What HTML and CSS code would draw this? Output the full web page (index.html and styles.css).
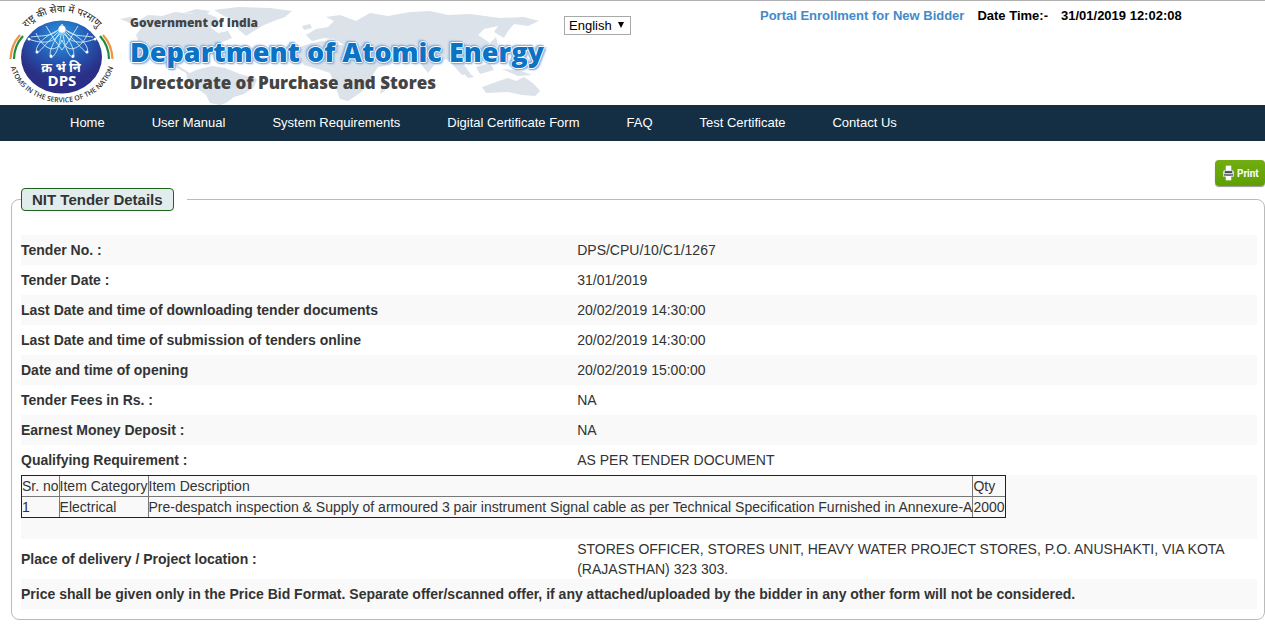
FILE: index.html
```html
<!DOCTYPE html>
<html lang="en">
<head>
<meta charset="utf-8">
<title>NIT Tender Details</title>
<link rel="stylesheet" href="styles.css">
</head>
<body>
<header class="masthead">
  <div class="brand">
    <svg class="emblem" viewBox="0 0 110 98" role="img" aria-label="DPS emblem">
      <defs>
        <radialGradient id="globe" cx="50%" cy="22%" r="75%">
          <stop offset="0" stop-color="#2b9be0"/>
          <stop offset=".45" stop-color="#2459b4"/>
          <stop offset=".8" stop-color="#2b2f86"/>
        </radialGradient>
        <path id="arc-top" d="M14 29 A44 39 0 0 1 94 29"/>
        <path id="arc-bottom" d="M1 50 A52.500 46 0 0 0 107 50"/>
      </defs>
      <ellipse cx="53.500" cy="51" rx="40.500" ry="36.500" fill="url(#globe)"/>
      <g fill="none" stroke="#d7ecfa" stroke-width=".9">
        <path d="M20 33C30 36 44 41 54 25C64 41 78 36 87 33"/>
        <path d="M28 27C34 42 48 50 54 34C60 50 74 42 80 27"/>
        <path d="M23 31C38 29 48 31 54 18C60 31 70 29 85 31"/>
        <path d="M54 23C42 32 34 44 29 47C25 40 40 27 54 23C68 27 83 40 79 47C74 44 66 32 54 23"/>
        <path d="M54 23C42 40 41 48 43 52C50 48 52 35 54 23C56 35 58 48 65 52C67 48 66 40 54 23"/>
        <path d="M38 20Q46 34 54 44Q62 34 70 20"/>
      </g>
      <g fill="#fff">
        <circle cx="54" cy="23" r="3.500"/>
        <circle cx="21" cy="33" r="1.500"/><circle cx="87" cy="33" r="1.500"/>
        <circle cx="29" cy="46" r="1.500"/><circle cx="79" cy="46" r="1.500"/>
        <circle cx="43" cy="50" r="1.500"/><circle cx="65" cy="50" r="1.500"/>
      </g>
      <g fill="none" stroke-width="2.200">
        <path d="M12 29Q3 39 2.500 53" stroke="#f0944a"/>
        <path d="M15 30Q6 40 6 53" stroke="#238b3c"/>
        <path d="M95 29Q104 39 104.500 53" stroke="#f0944a"/>
        <path d="M92 30Q101 40 101 53" stroke="#238b3c"/>
      </g>
      <text class="emblem-hindi" x="53" y="66" text-anchor="middle">क्र भं नि</text>
      <text class="emblem-dps" x="54" y="80" text-anchor="middle">DPS</text>
      <text class="emblem-motto"><textPath href="#arc-top" startOffset="50%" text-anchor="middle">राष्ट्र की सेवा में परमाणु</textPath></text>
      <text class="emblem-ring"><textPath href="#arc-bottom" startOffset="50%" text-anchor="middle">ATOMS IN THE SERVICE OF THE NATION</textPath></text>
    </svg>
    <svg class="map" viewBox="0 0 430 104" aria-hidden="true">
      <g fill="#dbe2ea">
        <path d="M0 18L10 16L18 20L28 14L42 15L55 11L72 13L85 12L96 16L100 22L90 26L98 32L108 30L112 37L100 42L92 48L84 54L80 62L70 58L55 60L60 66L70 72L76 69L92 65L105 67L120 73L137 78L134 86L124 93L114 96L106 102L100 104L90 102L86 94L78 88L68 80L66 72L52 64L42 58L30 52L20 44L16 34L22 26L10 22Z"/>
        <path d="M94 9L118 6L150 7L172 10L165 16L154 20L144 24L134 30L126 35L118 28L116 20L104 15Z"/>
        <path d="M64 12L76 8L90 10L86 14ZM182 25L190 23L192 27L184 29Z"/>
        <path d="M186 34L196 28L208 26L214 20L206 16L220 14L236 20L250 12L268 15L290 11L310 10L328 14L350 13L380 17L404 16L419 20L408 25L394 23L388 30L384 37L374 31L378 25L364 28L358 34L370 42L362 48L354 58L344 64L350 72L342 74L332 63L326 58L314 64L308 72L300 62L290 55L280 56L270 64L258 66L254 72L250 82L240 92L228 100L220 98L214 82L210 72L198 68L184 64L178 56L180 46L192 42L204 40L212 44L224 44L214 38L204 37L192 40Z"/>
        <path d="M336 64L346 69L354 76L348 77ZM356 66L370 62L374 69L360 73ZM382 68L398 69L412 74L398 75ZM370 42L376 36L378 44L371 52Z"/>
        <path d="M362 86L376 81L388 77L396 80L404 76L414 83L420 90L415 95L402 94L388 91L366 92Z"/>
        <path d="M262 82L267 78L265 90L260 93Z"/>
      </g>
    </svg>
    <div class="wordmark">
      <p class="gov">Government of India</p>
      <h1 class="department">Department of Atomic Energy</h1>
      <p class="directorate">Directorate of Purchase and Stores</p>
    </div>
  </div>
  <div class="language">
    <select aria-label="Language"><option>English</option></select>
    <svg viewBox="0 0 8 7" aria-hidden="true"><path d="M1 0H7L4 6Z"/></svg>
  </div>
  <div class="status">
    <a href="#">Portal Enrollment for New Bidder</a>
    <span>Date Time:-</span>
    <time>31/01/2019 12:02:08</time>
  </div>
</header>
<nav class="menu">
  <a href="#">Home</a>
  <a href="#">User Manual</a>
  <a href="#">System Requirements</a>
  <a href="#">Digital Certificate Form</a>
  <a href="#">FAQ</a>
  <a href="#">Test Certificate</a>
  <a href="#">Contact Us</a>
</nav>
<main>
  <div class="toolbar">
    <button class="print" type="button">
      <svg viewBox="0 0 12 16" aria-hidden="true">
        <path d="M3 0H9V6H3Z" fill="#fff"/>
        <path d="M1 5H11L12 7V12H0V7Z" fill="#d9dce2"/>
        <path d="M2 6H10V8H2Z" fill="#3f4450"/>
        <path d="M1 9H11V11H1Z" fill="#6d7380"/>
        <path d="M3 10H9V16H3Z" fill="#fff"/>
        <path d="M3 10H9V11H3Z" fill="#3f4450"/>
      </svg>
      Print
    </button>
  </div>
  <fieldset class="tender">
    <legend><span>NIT Tender Details</span></legend>
    <table class="details">
      <tbody>
        <tr><th scope="row">Tender No. :</th><td>DPS/CPU/10/C1/1267</td></tr>
        <tr><th scope="row">Tender Date :</th><td>31/01/2019</td></tr>
        <tr><th scope="row">Last Date and time of downloading tender documents</th><td>20/02/2019 14:30:00</td></tr>
        <tr><th scope="row">Last Date and time of submission of tenders online</th><td>20/02/2019 14:30:00</td></tr>
        <tr><th scope="row">Date and time of opening</th><td>20/02/2019 15:00:00</td></tr>
        <tr><th scope="row">Tender Fees in Rs. :</th><td>NA</td></tr>
        <tr><th scope="row">Earnest Money Deposit :</th><td>NA</td></tr>
        <tr><th scope="row">Qualifying Requirement :</th><td>AS PER TENDER DOCUMENT</td></tr>
        <tr>
          <td class="items-cell" colspan="2">
            <table class="items">
              <thead>
                <tr><th scope="col">Sr. no</th><th scope="col">Item Category</th><th scope="col">Item Description</th><th scope="col">Qty</th></tr>
              </thead>
              <tbody>
                <tr><td>1</td><td>Electrical</td><td>Pre-despatch inspection &amp; Supply of armoured 3 pair instrument Signal cable as per Technical Specification Furnished in Annexure-A</td><td>2000</td></tr>
              </tbody>
            </table>
          </td>
        </tr>
        <tr class="place"><th scope="row">Place of delivery / Project location :</th><td>STORES OFFICER, STORES UNIT, HEAVY WATER PROJECT STORES, P.O. ANUSHAKTI, VIA KOTA (RAJASTHAN) 323 303.</td></tr>
        <tr><th colspan="2">Price shall be given only in the Price Bid Format. Separate offer/scanned offer, if any attached/uploaded by the bidder in any other form will not be considered.</th></tr>
      </tbody>
    </table>
  </fieldset>
</main>
</body>
</html>
```
FILE: styles.css
```css
* { box-sizing: border-box; }

body {
  margin: 0;
  background: #fff;
  color: #333;
  font: 14px/20px "Liberation Sans", Arial, sans-serif;
}

a { text-decoration: none; }

.masthead {
  display: flex;
  align-items: flex-start;
  height: 105px;
  border-top: 1px solid #b0b0b0;
}

.brand {
  position: relative;
  display: flex;
  flex: none;
  width: 564px;
  height: 104px;
  padding-left: 8px;
}

.emblem {
  flex: none;
  width: 110px;
  height: 98px;
  margin-top: 5px;
  overflow: visible;
}

.emblem-hindi { font: bold 13px "Noto Sans", "Noto Sans Devanagari", sans-serif; fill: #fff; }
.emblem-dps { font: bold 15px "Open Sans", sans-serif; fill: #fff; }
.emblem-motto { font: 10px "Noto Sans", "Noto Sans Devanagari", sans-serif; fill: #222; }
.emblem-ring { font: 600 7px "Open Sans", sans-serif; fill: #333; }

.map {
  position: absolute;
  left: 120px;
  top: 0;
  width: 430px;
  height: 104px;
}

.wordmark {
  position: relative;
  margin-left: 12px;
  padding-top: 12px;
  color: #444;
  font-family: "Open Sans", sans-serif;
  white-space: nowrap;
}

.wordmark p, .wordmark h1 { margin: 0; font-weight: 800; }

.gov { font-size: 12px; line-height: 20px; }

.department {
  font-size: 27px;
  line-height: 38px;
  color: #0b72c4;
  text-shadow:
    1px 0 #fff, -1px 0 #fff, 0 1px #fff, 0 -1px #fff,
    2px 0 1px #86b0de, -2px 0 1px #86b0de, 0 2px 1px #86b0de, 0 -2px 1px #86b0de,
    2px 2px 2px #86b0de, -2px -2px 2px #86b0de;
}

.directorate { font-size: 17px; line-height: 24px; }

.language {
  position: relative;
  flex: none;
  width: 67px;
  margin-top: 15px;
}

.language select {
  display: block;
  appearance: none;
  width: 100%;
  height: 19px;
  padding: 0 4px;
  border: 1px solid #a9a9a9;
  border-radius: 0;
  background: #fff;
  color: #000;
  font: 13px/16px "Liberation Sans", Arial, sans-serif;
}

.language svg {
  position: absolute;
  right: 6px;
  top: 6px;
  width: 8px;
  height: 7px;
  pointer-events: none;
}

.status {
  display: flex;
  gap: 13px;
  margin: 5px 0 0 129px;
  color: #000;
  font-size: 13px;
  font-weight: bold;
  white-space: nowrap;
}

.status a { color: #428bca; }

.menu {
  display: flex;
  gap: 47px;
  padding: 8px 70px;
  background: #142f43;
  font-size: 13px;
}

.menu a { color: #fff; }

.toolbar {
  display: flex;
  justify-content: flex-end;
  padding-top: 19px;
}

.print {
  display: flex;
  align-items: center;
  gap: 3px;
  width: 50px;
  height: 26px;
  padding: 0 4px 0 8px;
  border: 0;
  border-radius: 4px;
  background: linear-gradient(#72ad12, #5f9f04);
  box-shadow: 0 1px 1px #999;
  color: #fff;
  font: bold 10px Roboto, sans-serif;
}

.print svg { flex: none; width: 11px; height: 16px; }

.tender {
  min-width: 0;
  margin: 2px 0 0 11px;
  padding: 24px 7px 10px 9px;
  border: 1px solid #bbb;
  border-radius: 8px;
}

.tender legend { padding: 0 13px 0 0; }

.tender legend span {
  display: block;
  padding: 0 10px;
  border: 1px solid #1c641c;
  border-radius: 4px;
  background: #e0edec;
  font-size: 15px;
  font-weight: bold;
  line-height: 21px;
}

.details {
  width: 100%;
  border-collapse: collapse;
}

.details th, .details td { padding: 5px 0; text-align: left; }
.details > tbody > tr:nth-child(odd) { background: #f9f9f9; }
.details > tbody > tr > th:first-child { width: 45%; }
.details .place th, .details .place td { padding: 0; }
.details .items-cell { padding: 0 0 21px; }

.items {
  border-collapse: collapse;
  outline: 1px solid #222;
  outline-offset: -1px;
}

.items th, .items td {
  border: 1px solid #777;
  font-weight: normal;
}

.details .items th, .details .items td { padding: 0; }
```
